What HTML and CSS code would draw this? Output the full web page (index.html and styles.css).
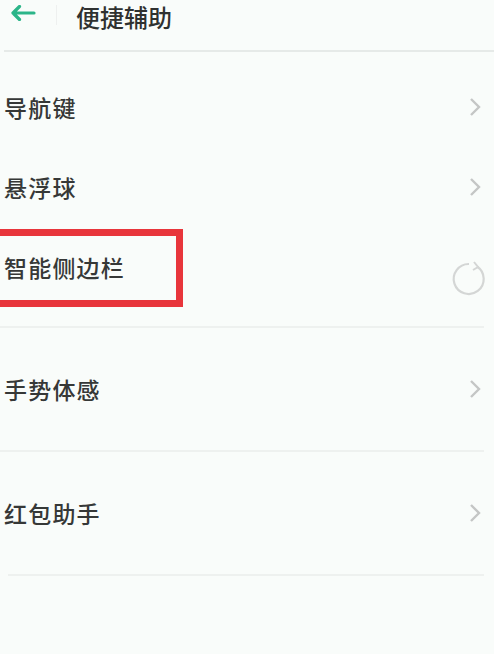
FILE: index.html
```html
<!DOCTYPE html>
<html lang="zh">
<head>
<meta charset="utf-8">
<link rel="stylesheet" href="styles.css">
</head>
<body>
<div class="screen">
  <header class="topbar">
    <svg class="back" width="26" height="16" viewBox="0 0 26 16">
      <path d="M24 8H3M9.5 1.5L3 8l6.5 6.5" fill="none" stroke="#2cb589" stroke-width="3.2" stroke-linecap="round" stroke-linejoin="round"/>
    </svg>
    <span class="vsep"></span>
    <span class="title">便捷辅助</span>
  </header>

  <section class="group first">
    <div class="row"><span class="label">导航键</span>
      <svg class="chev" width="14" height="20" viewBox="0 0 14 20"><path d="M3 2l8 8-8 8" fill="none" stroke="#c4c6c5" stroke-width="2.4"/></svg>
    </div>
    <div class="row"><span class="label">悬浮球</span>
      <svg class="chev" width="14" height="20" viewBox="0 0 14 20"><path d="M3 2l8 8-8 8" fill="none" stroke="#c4c6c5" stroke-width="2.4"/></svg>
    </div>
    <div class="row highlight"><span class="label">智能侧边栏</span>
      <svg class="spinner" width="40" height="40" viewBox="0 0 40 40">
        <path d="M28 8.5A15 15 0 1 1 20 6" fill="none" stroke="#d4d6d5" stroke-width="2.2"/>
        <path d="M25 4l4 5-5 3" fill="none" stroke="#d4d6d5" stroke-width="2"/>
      </svg>
      <span class="redbox"></span>
    </div>
  </section>

  <section class="group tall">
    <div class="row"><span class="label">手势体感</span>
      <svg class="chev" width="14" height="20" viewBox="0 0 14 20"><path d="M3 2l8 8-8 8" fill="none" stroke="#c4c6c5" stroke-width="2.4"/></svg>
    </div>
  </section>

  <section class="group tall last">
    <div class="row"><span class="label">红包助手</span>
      <svg class="chev" width="14" height="20" viewBox="0 0 14 20"><path d="M3 2l8 8-8 8" fill="none" stroke="#c4c6c5" stroke-width="2.4"/></svg>
    </div>
  </section>
</div>
</body>
</html>
```

FILE: styles.css
```css
html, body {
  margin: 0;
  padding: 0;
  background: #f9fcfa;
}
.screen {
  width: 494px;
  height: 654px;
  overflow: hidden;
  font-family: "Noto Sans CJK SC", "Noto Sans", sans-serif;
  color: #363837;
}
.topbar {
  height: 50px;
  display: flex;
  align-items: flex-start;
  margin-left: 4px;
  border-bottom: 2px solid #e6eae8;
}
.back {
  margin-left: 6px;
  margin-top: 5px;
}
.vsep {
  width: 1px;
  height: 20px;
  background: #eef0ef;
  margin-left: 20px;
  margin-top: 5px;
}
.title {
  font-size: 24px;
  line-height: 34px;
  margin-left: 19px;
  font-weight: 500;
  color: #2f3130;
}
.group {
  border-bottom: 2px solid #eef1ef;
  margin-right: 10px;
}
.group.first {
  padding-top: 15px;
  padding-bottom: 19px;
}
.row {
  position: relative;
  height: 80px;
  display: flex;
  align-items: center;
  justify-content: space-between;
  padding-left: 4px;
}
.group.tall .row {
  height: 122px;
}
.group.last {
  margin-left: 8px;
}
.group.last .row {
  padding-left: 0;
  margin-left: -4px;
}
.label {
  font-size: 23px;
  letter-spacing: 1.2px;
  font-weight: 500;
}
.chev {
  margin-right: 2px;
}
.spinner {
  margin-right: -5px;
  margin-top: 22px;
}
.redbox {
  position: absolute;
  left: -8px;
  top: 2px;
  width: 177px;
  height: 64px;
  border: 7px solid #e8353b;
}
```
